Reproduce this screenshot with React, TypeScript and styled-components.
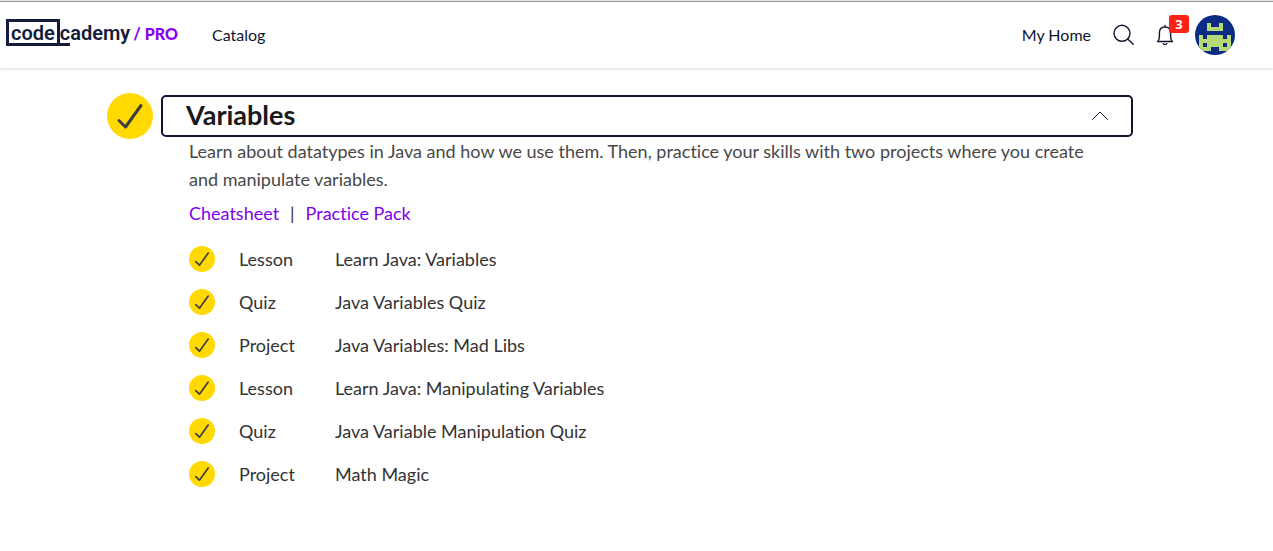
import React from "react";
import styled, { createGlobalStyle } from "styled-components";

const GlobalStyle = createGlobalStyle`
  * { box-sizing: border-box; }
  body {
    margin: 0;
    background: #fff;
    color: #333;
    font-family: Lato, "Liberation Sans", sans-serif;
    font-size: 18px;
    font-variant-ligatures: none;
  }
`;

const Header = styled.header`
  display: flex;
  align-items: center;
  justify-content: space-between;
  height: 68px;
  padding: 1px 38px 0 6px;
  border-top: 1px solid #e4e4e4;
  box-shadow: inset 0 1px #999, 0 1px 3px rgba(0, 0, 0, 0.16);
`;

const Nav = styled.nav`
  display: flex;
  align-items: center;
`;

const NavLink = styled.a`
  color: #10162f;
  font-size: 16px;
  line-height: 24px;
  text-decoration: none;
`;

const Logo = styled.a`
  display: flex;
  align-items: center;
  width: 172px;
  height: 32px;
  margin-right: 34px;
  padding-bottom: 5px;
  color: #141c3a;
  font-family: Roboto, sans-serif;
  font-size: 20px;
  font-weight: 600;
  line-height: 24px;
  text-decoration: none;
  white-space: nowrap;
`;

const LogoBox = styled.span`
  height: 27px;
  padding: 0 2px;
  border: 3px solid #141c3a;
  line-height: 22px;
`;

const LogoUnderlined = styled.span`
  height: 27px;
  padding-top: 2px;
  border-bottom: 3px solid #141c3a;
`;

const LogoRest = styled.span`
  height: 27px;
  padding-top: 2px;
`;

const Pro = styled.span`
  margin-left: 3px;
  padding-top: 3px;
  color: #8a00f5;
  font-family: Lato, sans-serif;
  font-size: 16px;
  font-weight: 900;
`;

const IconButton = styled.button`
  position: relative;
  display: flex;
  padding: 0;
  border: 0;
  background: none;
  color: #10162f;
  cursor: pointer;
`;

const Tools = styled(Nav)`
  gap: 20px;
`;

const Badge = styled.span`
  position: absolute;
  top: -8px;
  left: 14px;
  width: 20px;
  height: 18px;
  border-radius: 3px;
  background: #ff2118;
  color: #fff;
  font: 700 13px/18px "Open Sans", sans-serif;
  text-align: center;
`;

const Main = styled.main`
  padding: 27px 140px 40px 107px;
`;

const ModuleHeader = styled.div`
  display: flex;
  align-items: center;
  gap: 8px;
  height: 42px;
`;

const Heading = styled.h2`
  flex: 1;
  margin: 0;
`;

const Toggle = styled.button`
  display: flex;
  align-items: center;
  justify-content: space-between;
  width: 100%;
  height: 42px;
  padding: 0 22px 2px 23px;
  border: 2px solid #10162f;
  border-radius: 5px;
  background: #fff;
  color: #19191c;
  font: 700 27px/36px Lato, sans-serif;
  cursor: pointer;
`;

const Disc = styled.span<{ $size: number }>`
  display: flex;
  flex: none;
  width: ${(p) => p.$size}px;
  height: ${(p) => p.$size}px;
  border-radius: 50%;
  background: #ffd900;
`;

const Body = styled.div`
  padding-left: 82px;
`;

const Description = styled.p`
  max-width: 900px;
  margin: 0 0 6px;
  color: #484848;
  line-height: 28px;
`;

const Links = styled.div`
  display: flex;
  gap: 11px;
  margin-bottom: 10px;
  line-height: 28px;
`;

const TextLink = styled.a`
  color: #8000e8;
  text-decoration: none;
`;

const List = styled.ul`
  margin: 0;
  padding: 0;
  list-style: none;
`;

const Item = styled.li`
  display: grid;
  grid-template-columns: 50px 96px 1fr;
  align-items: center;
  height: 43px;
  line-height: 24px;
`;

const ItemLink = styled.a`
  color: inherit;
  text-decoration: none;
`;

const Check = ({ size, weight }: { size: number; weight: number }) => (
  <Disc $size={size}>
    <svg width={size} height={size} viewBox="0 0 46 46" fill="none" stroke="#3f3f3f" strokeWidth={weight} strokeLinecap="round" strokeLinejoin="round" role="img" aria-label="Completed">
      <path d="M12 27.500l6.500 6.500L34 12.500" />
    </svg>
  </Disc>
);

const items = [
  ["Lesson", "Learn Java: Variables"],
  ["Quiz", "Java Variables Quiz"],
  ["Project", "Java Variables: Mad Libs"],
  ["Lesson", "Learn Java: Manipulating Variables"],
  ["Quiz", "Java Variable Manipulation Quiz"],
  ["Project", "Math Magic"],
];

export default function App() {
  return (
    <>
      <GlobalStyle />
      <Header>
        <Nav>
          <Logo href="#">
            <LogoBox>code</LogoBox>
            <LogoUnderlined>c</LogoUnderlined>
            <LogoRest>ademy</LogoRest>
            <Pro>/ PRO</Pro>
          </Logo>
          <NavLink href="#">Catalog</NavLink>
        </Nav>
        <Tools>
          <NavLink href="#">My Home</NavLink>
          <IconButton aria-label="Search">
            <svg width="24" height="24" viewBox="0 0 24 24" fill="none" stroke="currentColor" strokeWidth="1.4" strokeLinecap="round">
              <circle cx="11" cy="10.3" r="8" />
              <path d="M16.700 16l5.500 5.300" />
            </svg>
          </IconButton>
          <IconButton aria-label="Notifications">
            <svg width="20" height="24" viewBox="0 0 20 24" fill="none" stroke="currentColor" strokeWidth="1.4" strokeLinecap="round" strokeLinejoin="round">
              <path d="M10 2.500v1.500M2.500 18.500h15M3 18.300c1.200-1.700 1.400-3 1.400-5.300V10c0-3.500 2-6 5.600-6s5.600 2.500 5.600 6v3c0 2.300.2 3.600 1.400 5.300M8.200 20.600c.5 1.300 3.100 1.300 3.600 0" />
            </svg>
            <Badge>3</Badge>
          </IconButton>
          <IconButton aria-label="Profile">
            <svg width="40" height="40" viewBox="0 0 40 40">
              <clipPath id="avatar"><circle cx="20" cy="20" r="20" /></clipPath>
              <g clipPath="url(#avatar)">
                <path fill="#0c2c84" d="M0 0h40v40H0z" />
                <path fill="#b5d977" fillRule="evenodd" d="M12 8h4v4h8V8h4v8H12zM4 20h4v4h4v-4h16v4h4v-4h4v16H24v-4h-8v4H4zM8 28v4h4v-4zM28 28v4h4v-4z" />
              </g>
            </svg>
          </IconButton>
        </Tools>
      </Header>
      <Main>
        <ModuleHeader>
          <Check size={46} weight={3} />
          <Heading>
            <Toggle aria-expanded="true">
              Variables
              <svg width="18" height="12" viewBox="0 0 18 12" fill="none" stroke="#10162f" strokeWidth="1" strokeLinecap="round" strokeLinejoin="round" aria-hidden="true">
                <path d="M1.500 10.500L9 3l7.500 7.500" />
              </svg>
            </Toggle>
          </Heading>
        </ModuleHeader>
        <Body>
          <Description>
            Learn about datatypes in Java and how we use them. Then, practice your skills with two projects where you create and manipulate variables.
          </Description>
          <Links>
            <TextLink href="#">Cheatsheet</TextLink>
            <span>|</span>
            <TextLink href="#">Practice Pack</TextLink>
          </Links>
          <List>
            {items.map(([kind, title]) => (
              <Item key={title}>
                <Check size={26} weight={3} />
                <span>{kind}</span>
                <ItemLink href="#">{title}</ItemLink>
              </Item>
            ))}
          </List>
        </Body>
      </Main>
    </>
  );
}
